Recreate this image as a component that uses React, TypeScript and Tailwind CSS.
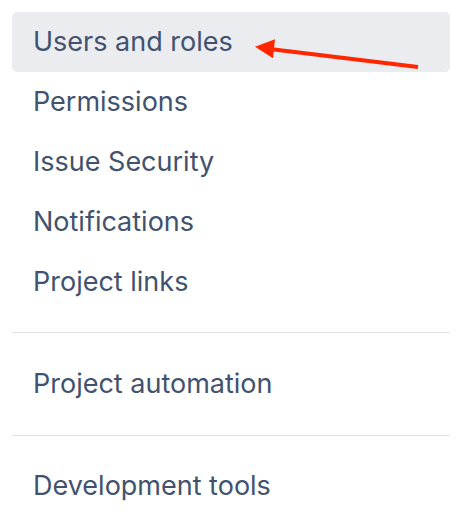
export default function App() {
  const top = ["Users and roles", "Permissions", "Issue Security", "Notifications", "Project links"];

  return (
    <div className="w-[458px] h-[520px] bg-white pl-3 pr-2 pt-3" style={{ fontFamily: "Inter, 'Noto Sans', sans-serif" }}>
      <ul className="flex flex-col">
        {top.map((label, i) => (
          <li
            key={label}
            className={`h-[60px] flex items-center pl-[21px] pt-px rounded-[5px] text-[27px] text-[#42526e] ${i === 0 ? "bg-[#ebecf0] relative" : ""}`}
          >
            {label}
            {i === 0 && (
              <svg className="absolute left-0 top-0" width="438" height="60" viewBox="0 0 438 60">
                {/* arrow pointing at the selected item */}
                <line x1="406" y1="55" x2="258" y2="37" stroke="#ff2600" strokeWidth="4" />
                <polygon points="243,34.7 263,27.3 261,46.3" fill="#ff2600" />
              </svg>
            )}
          </li>
        ))}
      </ul>
      <div className="mt-5 mb-[21px] h-px bg-[#dfe1e6]" />
      <div className="h-[60px] flex items-center pl-[21px] pt-px text-[27px] text-[#42526e]">Project automation</div>
      <div className="mt-[21px] mb-5 h-px bg-[#dfe1e6]" />
      <div className="h-[60px] flex items-center pl-[21px] pt-px text-[27px] text-[#42526e]">Development tools</div>
    </div>
  );
}
